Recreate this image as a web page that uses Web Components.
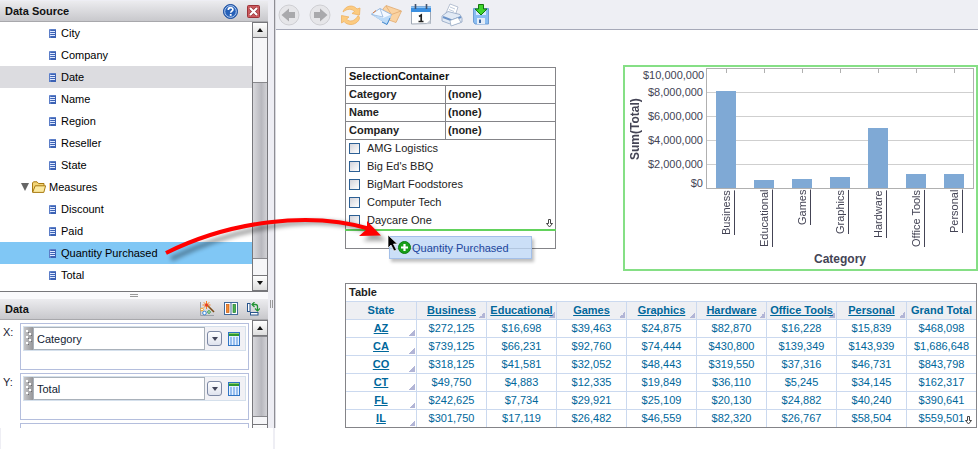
<!DOCTYPE html>
<html lang="en">
<head>
<meta charset="utf-8">
<title>Report designer</title>
<style>
html, body { height: 100%; margin: 0; }
body { background: #fff; font: 11px/18px "Liberation Sans", Arial, sans-serif; color: #000; overflow: hidden; }
</style>
</head>
<body>
<report-app></report-app>
<script>
const define = (name, html, init) => {
  const tpl = document.createElement('template');
  tpl.innerHTML = html;
  customElements.define(name, class extends HTMLElement {
    constructor() {
      super();
      this.attachShadow({ mode: 'open' }).append(tpl.content.cloneNode(true));
    }
    connectedCallback() { if (init && !this.ready) { this.ready = true; init(this, this.shadowRoot); } }
  });
};

define('panel-header', `
<style>
:host { display: flex; align-items: center; height: 20px; padding: 0 8px 0 5px; border-bottom: 1px solid #a8a8ac;
  background: linear-gradient(#ececef, #c8c8cc); }
h2 { flex: 1; margin: 0; font-size: 11px; font-weight: bold; color: #111; }
.tools { display: flex; gap: 9px; align-items: center; }
</style>
<h2><slot></slot></h2><div class="tools"><slot name="tools"></slot></div>`);

define('icon-button', `
<style>
:host { display: block; }
button { display: grid; place-items: center; padding: 0; border: 0; background: none; }
</style>
<button type="button"><slot></slot></button>`, (el, root) => {
  root.querySelector('button').setAttribute('aria-label', el.getAttribute('label'));
});

define('scroll-bar', `
<style>
:host { display: flex; flex-direction: column; width: 14px; border: 1px solid #77777b; background: #f6f6f8; }
button { flex: none; box-sizing: border-box; height: 15px; padding: 0; border: 0; background: linear-gradient(#fff, #ddd); display: grid; place-items: center; }
.up { border-bottom: 1px solid #77777b; }
.down { border-top: 1px solid #77777b; }
.thumb { flex: 1; margin: var(--before, 0) 0 var(--after, 0); border: solid #88888c; border-width: 1px 0;
  background: linear-gradient(90deg, #d8d8dc, #b8b8be 60%, #d2d2d6); }
</style>
<button class="up" type="button" aria-label="Scroll up"><svg width="6" height="4"><path d="M3 0 6 4H0Z" fill="#111"/></svg></button>
<div class="thumb"></div>
<button class="down" type="button" aria-label="Scroll down"><svg width="6" height="4"><path d="M3 4 6 0H0Z" fill="#111"/></svg></button>`);

define('tree-item', `
<style>
:host { display: flex; align-items: center; height: 22px; padding-left: 49px; gap: 5px; }
:host([hovered]) { background: #dcdce0; }
:host([selected]) { background: #80c7f5; }
svg { flex: none; }
</style>
<svg width="7" height="9" viewBox="0 0 7 9"><rect width="7" height="9" fill="#3c62b4"/><path d="M0 0h7M0 .5h1V9" stroke="#7d9bdc" fill="none"/><path d="M1 2.5h5M1 4.5h5M1 6.5h5" stroke="#dfe9ff"/></svg>
<slot></slot>`);

define('tree-folder', `
<style>
:host { display: block; }
.row { display: flex; align-items: center; height: 22px; padding-left: 21px; gap: 3px; }
</style>
<div class="row">
<svg width="8" height="8"><path d="M0 0H8L4 8Z" fill="#666"/></svg>
<svg width="14" height="12" viewBox="0 0 14 12"><path d="M.5 11V2L1.5 .8H5l1.5 1.700H12V5" fill="#f3d577" stroke="#a87a12"/><path d="M.6 11.400 3.200 4.800H13.600L11.800 11.400Z" fill="#fbe9a0" stroke="#a87a12"/></svg>
<span id="label"></span></div>
<slot></slot>`, (el, root) => { root.getElementById('label').textContent = el.getAttribute('label'); });

define('data-source-panel', `
<style>
:host { display: block; padding-top: 1px; }
.body { display: flex; height: 269px; border-bottom: 1px solid #77777b; background: #fff; }
.tree { flex: 1; }
scroll-bar { --before: 44px; --after: 16px; }
</style>
<panel-header>Data Source
<icon-button slot="tools" label="Help"><svg width="15" height="15" viewBox="0 0 15 15"><circle cx="7.5" cy="7.5" r="7" fill="#2560b8" stroke="#174a9c"/><circle cx="7.5" cy="7.5" r="5.8" fill="none" stroke="#b9d0f2"/><path d="M5.3 6c0-3.3 4.6-3 4.6-.5 0 1.6-2.2 1.7-2.2 3.3" fill="none" stroke="#fff" stroke-width="1.7"/><rect x="6.8" y="10" width="1.8" height="1.8" fill="#fff"/></svg></icon-button>
<icon-button slot="tools" label="Close"><svg width="13" height="13" viewBox="0 0 13 13"><rect x=".5" y=".5" width="12" height="12" rx="1" fill="#cc5a5e" stroke="#9c3338"/><path d="m3 3 7 7m0-7-7 7" stroke="#8f3034" stroke-width="3.4"/><path d="m3 3 7 7m0-7-7 7" stroke="#fff" stroke-width="2.2"/></svg></icon-button>
</panel-header>
<div class="body">
<div class="tree">
<tree-item>City</tree-item><tree-item>Company</tree-item><tree-item hovered>Date</tree-item><tree-item>Name</tree-item>
<tree-item>Region</tree-item><tree-item>Reseller</tree-item><tree-item>State</tree-item>
<tree-folder label="Measures"><tree-item>Discount</tree-item><tree-item>Paid</tree-item><tree-item selected>Quantity Purchased</tree-item><tree-item>Total</tree-item></tree-folder>
</div>
<scroll-bar></scroll-bar>
</div>`);

define('data-field', `
<style>
:host { display: grid; grid-template-columns: 17px 1fr; align-items: start; height: 47px; margin-bottom: 3px; }
label { color: #223; }
.box { box-sizing: border-box; height: 47px; padding: 2px 2px 0; border: 1px solid #b4bedd; }
.row { box-sizing: border-box; display: flex; align-items: center; height: 25px; border: 1px solid #d5e0ec; padding-right: 5px; background: #f1f1f5; }
.grip { flex: none; width: 9px; height: 23px; background: linear-gradient(90deg, #c4c4c6, #969699); }
input { flex: 1; min-width: 0; box-sizing: border-box; height: 23px; padding: 0 0 0 3px; border: 1px solid #a9b1ba; font: inherit; color: #123; background: #fff; }
button { flex: none; display: grid; place-items: center; padding: 0; border: 0; background: none; }
.drop { box-sizing: border-box; width: 15px; height: 15px; margin: 0 6px 0 2px; border: 1px solid #7c88a4; border-radius: 3px; background: linear-gradient(#fff, #dfe3ee); }
.empty .row { visibility: hidden; }
</style>
<label for="f"></label>
<div class="box"><div class="row">
<svg class="grip" viewBox="0 0 9 23"><g fill="#fff"><path d="M2 3h2v2H2zM5 6h2v2H5zM2 9h2v2H2zM5 12h2v2H5zM2 15h2v2H2z"/></g><g fill="#6d6d70"><path d="M4 5h1v1H4zM7 8h1v1H7zM4 11h1v1H4zM7 14h1v1H7zM4 17h1v1H4z"/></g></svg>
<input id="f" type="text">
<button class="drop" type="button" aria-label="Options"><svg width="6" height="4"><path d="M0 0H6L3 4Z" fill="#44475a"/></svg></button>
<button type="button" aria-label="Formula"><svg width="12" height="14" viewBox="0 0 12 14"><rect x=".5" y=".5" width="11" height="13" fill="#e6f1ff" stroke="#2f74c4"/><path d="M1 1h10v3H1z" fill="#2f9a2f"/><path d="M1 1.500h10" stroke="#8fd06f"/><path d="M2 6h8M2 8h8M2 10h8M2 12h8" stroke="#4a8ee0" stroke-dasharray="2 1"/></svg></button>
</div></div>`, (el, root) => {
  root.querySelector('label').textContent = el.getAttribute('label') || '';
  root.querySelector('input').value = el.getAttribute('value') || '';
  if (!el.hasAttribute('value')) root.querySelector('.box').classList.add('empty');
});

define('data-panel', `
<style>
:host { display: block; }
.body { display: flex; height: 108px; overflow: hidden; background: #fff; }
.fields { flex: 1; padding: 3px 3px 0 3px; overflow: hidden; }
scroll-bar { --after: 7px; margin-bottom: -12px; }
</style>
<panel-header>Data
<icon-button slot="tools" label="Chart wizard"><svg width="16" height="16" viewBox="0 0 16 16"><path d="M1.5 1V14.5H15" stroke="#9aa0aa" fill="none"/><path d="M8 4 15 11" stroke="#7c4a16" stroke-width="1.6"/><path d="M7.5 0V8M3.5 4h8M4.8 1.3l5.4 5.4M10.2 1.3 4.8 6.7" stroke="#f58220"/><circle cx="7.5" cy="4" r="1.5" fill="#e8392b"/><circle cx="3" cy="8.5" r="1.4" fill="#fff" stroke="#f0a020"/><circle cx="5.5" cy="12" r="1.8" fill="#fff" stroke="#3b8ad8"/><circle cx="10" cy="11" r="1.3" fill="#fff" stroke="#2f9a40"/></svg></icon-button>
<icon-button slot="tools" label="Columns"><svg width="14" height="14" viewBox="0 0 14 14"><rect x=".5" y=".5" width="13" height="12" fill="#fff" stroke="#41699a"/><path d="M7 1V13" stroke="#41699a"/><rect x="2.5" y="2.5" width="2.5" height="8" fill="#f28b32" stroke="#c85a12" stroke-width=".7"/><rect x="9" y="2.5" width="2.5" height="8" fill="#49b050" stroke="#1f7d2b" stroke-width=".7"/></svg></icon-button>
<icon-button slot="tools" label="Swap axes"><svg width="13" height="14" viewBox="0 0 13 14"><rect x=".5" y="1.500" width="2.500" height="8" fill="#fff" stroke="#27548c"/><rect x="3.500" y="10.500" width="7.500" height="2.500" fill="#fff" stroke="#27548c"/><path d="M5 2.500h3.500Q10.500 2.500 10.500 4.500V9" fill="none" stroke="#239434" stroke-width="1.300"/><path d="M7.500 0 5 2.500 7.500 5M8 6.500l2.500 2.500L13 6.500" fill="none" stroke="#239434" stroke-width="1.200"/></svg></icon-button>
</panel-header>
<div class="body">
<div class="fields"><data-field label="X:" value="Category"></data-field><data-field label="Y:" value="Total"></data-field><data-field></data-field></div>
<scroll-bar></scroll-bar>
</div>`);

define('side-bar', `
<style>
:host { display: grid; grid-template-columns: 1fr 7px; width: 275px; background: #eeeef4; }
.hsplit { display: grid; place-items: center; height: 7px; background: #fafafc; }
.hsplit i { width: 8px; height: 1px; border: solid #999; border-width: 1px 0; }
.vsplit { display: grid; place-items: center; padding-top: 180px; border-right: 1px solid #8e8e94; }
.vsplit i { width: 1px; height: 8px; border: solid #999; border-width: 0 1px; }
</style>
<div><data-source-panel></data-source-panel><div class="hsplit"><i></i></div><data-panel></data-panel></div>
<div class="vsplit"><i></i></div>`);

define('tool-bar', `
<style>
:host { display: flex; align-items: center; height: 29px; padding: 0 2px; border-bottom: 1px solid #a6a9b8; background: #eeeff4; gap: 9px; }
</style>
<icon-button label="Back"><svg width="22" height="22" viewBox="0 0 22 22"><circle cx="11" cy="11" r="10" fill="#e6e6e9" stroke="#cfcfd3"/><path d="M3.500 11 11 4.500V8h6v6h-6v3.500Z" fill="#a9a9ac"/></svg></icon-button>
<icon-button label="Forward"><svg width="22" height="22" viewBox="0 0 22 22"><circle cx="11" cy="11" r="10" fill="#e6e6e9" stroke="#cfcfd3"/><path d="M18.500 11 11 4.500V8H5v6h6v3.500Z" fill="#a9a9ac"/></svg></icon-button>
<icon-button label="Refresh"><svg width="22" height="22" viewBox="0 0 22 22"><path d="M3 8C5 1.500 13 0 17 5L20 4 19.500 11 12 9.500 14.500 7.500C12 4.500 7 4.500 3 8Z" fill="#fccb80" stroke="#eeb365" stroke-width=".8"/><path d="M1.500 11.500 9 13 6.500 15C9.500 18.500 15 17.500 18 11.500 22 14 17 20.500 11 20.500 8 20.500 5.500 19.500 4 17.500L1.500 19Z" fill="#fccb80" stroke="#eeb365" stroke-width=".8"/></svg></icon-button>
<icon-button label="Mail"><svg width="31" height="22" viewBox="0 0 31 22"><path d="M12 5 15 1.500 30.500 7 25 18.500 12 14Z" fill="#fad3a2" stroke="#dfa970" stroke-width=".8"/><path d="m15 2 5.500 8.500L30 7" fill="none" stroke="#dfa970" stroke-width=".8"/><path d="M.5 10 9 4.500 20.500 10.500 16 20Z" fill="#f2f8ff" stroke="#86abd8" stroke-width=".8"/><path d="M.5 10.500 16 20 20.500 10.500 12 14Z" fill="#bcdbf8"/><path d="m.5 10.500 11.500 2.500L9 4.500" fill="none" stroke="#93b5dc" stroke-width=".8"/><path d="M11 18 16 20.500 19 14" fill="none" stroke="#3d87cf"/><path d="m2 9 3-2.500" stroke="#e07a38"/></svg></icon-button>
<icon-button label="Schedule"><svg width="20" height="21" viewBox="0 0 20 21"><path d="M.5 3h19v16.500l-19 .500Z" fill="#fff" stroke="#9fa8b5"/><path d="M0 2.500h20V8H0Z" fill="#3b8fe0"/><path d="M0 3.500h20" stroke="#8cc3f5"/><path d="M4.500 0v5M15.500 0v5" stroke="#42526b" stroke-width="1.600"/><path d="m8 12.500 2.200-1.500V18M7.500 17.500h5" fill="none" stroke="#222" stroke-width="1.700"/><path d="m15 20 4.500-4.500V20Z" fill="#c2c8d2"/></svg></icon-button>
<icon-button label="Print"><svg width="24" height="24" viewBox="0 0 24 24"><path d="M6 10 10 1 18 4 15 13Z" fill="#fff" stroke="#a6b3c8" stroke-width=".8"/><path d="m10 4 5 2M9 6.500l5 2" stroke="#c0cbdc"/><path d="M2 13 8 8.500 20 11.500 22 15V19L13 22 2 18Z" fill="#e2eaf5" stroke="#8fa3c2" stroke-width=".8"/><path d="m3 14 9 3.500 9-3.500" fill="none" stroke="#6c93c8" stroke-width="2"/><path d="m10 17.500 8-3 3 5-10 3.500Z" fill="#fff" stroke="#9badc6" stroke-width=".8"/></svg></icon-button>
<icon-button label="Save"><svg width="16" height="21" viewBox="0 0 16 21"><path d="M.5 4.500h15v15.500H2L.5 18Z" fill="#8abdf2" stroke="#6d9cd4"/><path d="M3 5h10v6H3z" fill="#d5e9fd"/><path d="M4 14h8v6H4z" fill="#e4edf8"/><path d="M6 15.500h2V19H6z" fill="#3e69a4"/><path d="M5.500.500h5V5H14L8 11 2 5h3.500Z" fill="#3fd52b" stroke="#14750e"/></svg></icon-button>`);

define('selection-container', `
<style>
:host { display: block; box-sizing: border-box; border: 1px solid #848488; height: 182px; color: #222; }
h3, dl, dt, dd, ul { margin: 0; padding: 0; }
h3, dt, dd { height: 17px; line-height: 17px; font-size: 11px; font-weight: bold; padding: 0 3px; border-bottom: 1px solid #848488; }
h3 { color: #111; }
dl { display: grid; grid-template-columns: 99px 1fr; }
dd { padding-left: 2px; border-left: 1px solid #848488; }
ul { list-style: none; position: relative; border-bottom: 2px solid #62d25c; margin: -1px -1px 0; }
li { padding-left: 4px; height: 18px; }
label { display: flex; align-items: center; gap: 7px; height: 18px; }
input { appearance: none; box-sizing: border-box; width: 11px; height: 11px; margin: 0; border: 1px solid #2c5f94; background: linear-gradient(135deg, #d3d3da, #fff); }
.more { position: absolute; right: 3px; bottom: 1px; height: 9px; padding: 0; }
.more svg { display: block; }
</style>
<h3>SelectionContainer</h3>
<dl><dt>Category</dt><dd>(none)</dd><dt>Name</dt><dd>(none)</dd><dt>Company</dt><dd>(none)</dd></dl>
<ul></ul>`, (el, root) => {
  root.querySelector('ul').innerHTML = ['AMG Logistics', "Big Ed's BBQ", 'BigMart Foodstores', 'Computer Tech', 'Daycare One']
    .map(t => `<li><label><input type="checkbox">${t}</label></li>`).join('') +
    '<li class="more"><svg width="7" height="9" viewBox="0 0 7 9"><path d="M2.500.500h2V4.500h2L3.500 8 .5 4.500h2Z" fill="#fff" stroke="#444"/></svg></li>';
});

define('bar-chart', `
<style>
:host { box-sizing: border-box; display: grid; grid-template: 122px 60px 18px / 16px 63px 1fr; border: 2px solid #85df85; padding: 1px 2px; height: 206px; color: #444455; line-height: 14px; }
.ytitle { writing-mode: vertical-rl; transform: rotate(180deg); text-align: center; font: bold 12px/16px "Liberation Sans", sans-serif; }
.scale { display: flex; flex-direction: column; text-align: right; padding-right: 3px; white-space: nowrap; }
.scale span { height: 24px; line-height: 24px; }
.scale .end { height: 12px; line-height: 14px; }
.plot { box-sizing: border-box; height: 121px; border: 1px solid #b0b0b0; display: grid; grid-template-columns: repeat(7, 1fr);
  background: repeating-linear-gradient(transparent 0 23px, #cfcfcf 23px 24px) 0 0 / 100% 119px; }
.slot { display: flex; flex-direction: column; align-items: center; justify-content: space-between; }
.slot i { width: 1px; height: 4px; background: #b0b0b0; }
.slot b { width: 20px; background: #7fa9d5; }
.names { grid-column: 3; display: grid; grid-template-columns: repeat(7, 1fr); padding: 0 1px; }
.names a { writing-mode: vertical-rl; transform: rotate(180deg); justify-self: center; text-align: right; color: inherit; text-underline-offset: 2px; }
.xtitle { grid-column: 3; text-align: center; font: bold 12px/18px "Liberation Sans", sans-serif; }
</style>
<div class="ytitle">Sum(Total)</div>
<div class="scale"><span class="end">$10,000,000</span><span>$8,000,000</span><span>$6,000,000</span><span>$4,000,000</span><span>$2,000,000</span><span class="end">$0</span></div>
<div class="plot"></div><div class="names"></div><div class="xtitle">Category</div>`, (el, root) => {
  const bars = [['Business', 97], ['Educational', 8], ['Games', 9], ['Graphics', 11], ['Hardware', 60], ['Office Tools', 14], ['Personal', 14]];
  root.querySelector('.plot').innerHTML = bars.map(([, h]) => `<div class="slot"><i></i><b style="height:${h}px"></b></div>`).join('');
  root.querySelector('.names').innerHTML = bars.map(([n]) => `<a href="#">${n}</a>`).join('');
});

define('cross-table', `
<style>
:host { display: block; position: relative; border: 1px solid #848488; color: #00679b; }
table { width: 100%; border-collapse: separate; border-spacing: 0; table-layout: fixed; }
caption { height: 17px; line-height: 17px; padding: 0 3px; text-align: left; font-weight: bold; color: #222; }
th, td { height: 17px; line-height: 17px; padding: 0; text-align: center; border: solid #cbd9ef; border-width: 1px 0 0 1px; white-space: nowrap; }
th:first-child { border-left: 0; }
thead th { background: #eeeff3; }
a { color: inherit; }
.drill { background: linear-gradient(135deg, transparent 50%, #b2b5d6 50%) right 1px bottom 1px / 6px 6px no-repeat; }
thead .drill { background-color: #eeeff3; }
svg { position: absolute; right: 4px; bottom: 2px; }
</style>
<table><caption>Table</caption><thead><tr></tr></thead><tbody></tbody></table>
<svg width="7" height="9" viewBox="0 0 7 9"><path d="M2.500.500h2V4.500h2L3.500 8 .5 4.500h2Z" fill="#fff" stroke="#444"/></svg>`, (el, root) => {
  const cols = ['Business', 'Educational', 'Games', 'Graphics', 'Hardware', 'Office Tools', 'Personal'];
  const rows = [
    'AZ $272,125 $16,698 $39,463 $24,875 $82,870 $16,228 $15,839 $468,098',
    'CA $739,125 $66,231 $92,760 $74,444 $430,800 $139,349 $143,939 $1,686,648',
    'CO $318,125 $41,581 $32,052 $48,443 $319,550 $37,316 $46,731 $843,798',
    'CT $49,750 $4,883 $12,335 $19,849 $36,110 $5,245 $34,145 $162,317',
    'FL $242,625 $7,734 $29,921 $25,109 $20,130 $24,882 $40,240 $390,641',
    'IL $301,750 $17,119 $26,482 $46,559 $82,320 $26,767 $58,504 $559,501'];
  root.querySelector('thead tr').innerHTML = '<th scope="col">State</th>' +
    cols.map(c => `<th scope="col" class="drill"><a href="#">${c}</a></th>`).join('') + '<th scope="col">Grand Total</th>';
  root.querySelector('tbody').innerHTML = rows.map(r => {
    const [s, ...v] = r.split(' ');
    return `<tr><th scope="row" class="drill"><a href="#">${s}</a></th>${v.map(x => `<td>${x}</td>`).join('')}</tr>`;
  }).join('');
});

define('drag-chip', `
<style>
:host { box-sizing: border-box; display: flex; align-items: center; gap: 1px; width: 143px; height: 23px; padding-left: 8px;
  border: 1px solid #a3bfe8; background: rgba(190, 215, 245, .8); box-shadow: 2px 3px 3px rgba(0, 0, 0, .25); color: #1c46a0; }
svg { flex: none; }
</style>
<svg width="13" height="13" viewBox="0 0 13 13"><circle cx="6.500" cy="6.500" r="6" fill="#18a018" stroke="#0c7d10"/><path d="M6.500 3v7M3 6.500h7" stroke="#fff" stroke-width="2.200"/></svg>
<span><slot></slot></span>`);

define('drag-arrow', `
<style>
:host { display: block; pointer-events: none; }
svg { display: block; overflow: visible; }
.shade { filter: blur(2px); opacity: .35; }
</style>
<svg width="240" height="60" viewBox="160 205 240 60">
<g class="shade" transform="translate(5 6)"><path d="M166 253C235 219 320 205 367 227" fill="none" stroke="#000" stroke-width="5"/><path d="M381 235 358 235 366 228 365 219Z"/></g>
<path d="M166 253C230 221 310 211 370 229" fill="none" stroke="#f00" stroke-width="4"/>
<path d="M381 235.500 359 236 367 229 367 221Z" fill="#f00"/>
<path d="M388 235v13l3-3 3 6 2.500-1-3-6h4Z" fill="#000" stroke="#fff" stroke-width=".7"/>
</svg>`);

define('report-app', `
<style>
:host { display: grid; grid-template-columns: 275px 1fr; grid-template-rows: auto 1fr; position: relative; min-height: 100vh; }
main { background: #fff; border-left: 1px solid #d8d8de; }
.rest { box-sizing: border-box; border: solid #eeeef4; border-width: 0 2px 0 1px; }
.canvas { display: grid; grid-template-columns: 211px 1fr; column-gap: 67px; row-gap: 12px; padding: 35px 0 0 69px; align-items: start; }
selection-container { margin-top: 2px; }
cross-table { grid-column: 1 / -1; margin-right: 1px; }
drag-chip { position: absolute; left: 389px; top: 236px; }
drag-arrow { position: absolute; left: 160px; top: 205px; }
</style>
<side-bar></side-bar>
<main><tool-bar></tool-bar>
<div class="canvas"><selection-container></selection-container><bar-chart></bar-chart><cross-table></cross-table></div></main>
<div class="rest"></div>
<drag-chip>Quantity Purchased</drag-chip>
<drag-arrow></drag-arrow>`);
</script>
</body>
</html>
